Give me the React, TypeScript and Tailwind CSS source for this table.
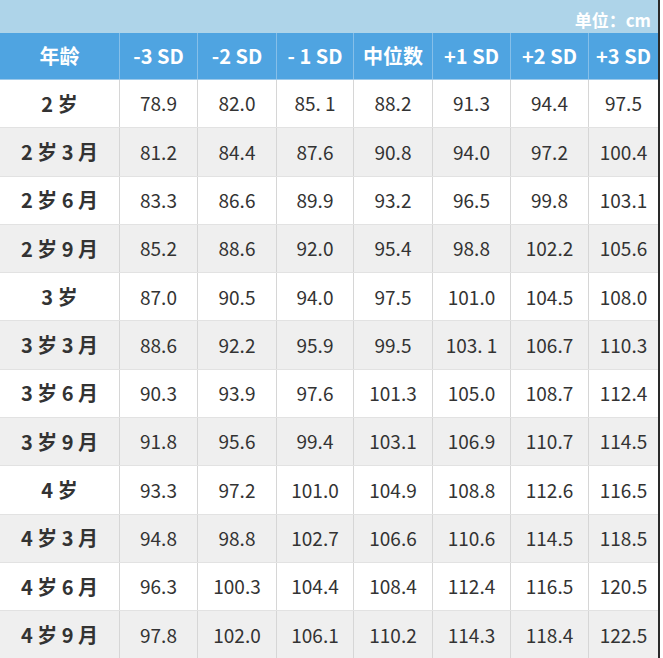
import React from "react";

const headers = ["年龄", "-3 SD", "-2 SD", "- 1 SD", "中位数", "+1 SD", "+2 SD", "+3 SD"];

const rows: string[][] = [
  ["2 岁", "78.9", "82.0", "85. 1", "88.2", "91.3", "94.4", "97.5"],
  ["2 岁 3 月", "81.2", "84.4", "87.6", "90.8", "94.0", "97.2", "100.4"],
  ["2 岁 6 月", "83.3", "86.6", "89.9", "93.2", "96.5", "99.8", "103.1"],
  ["2 岁 9 月", "85.2", "88.6", "92.0", "95.4", "98.8", "102.2", "105.6"],
  ["3 岁", "87.0", "90.5", "94.0", "97.5", "101.0", "104.5", "108.0"],
  ["3 岁 3 月", "88.6", "92.2", "95.9", "99.5", "103. 1", "106.7", "110.3"],
  ["3 岁 6 月", "90.3", "93.9", "97.6", "101.3", "105.0", "108.7", "112.4"],
  ["3 岁 9 月", "91.8", "95.6", "99.4", "103.1", "106.9", "110.7", "114.5"],
  ["4 岁", "93.3", "97.2", "101.0", "104.9", "108.8", "112.6", "116.5"],
  ["4 岁 3 月", "94.8", "98.8", "102.7", "106.6", "110.6", "114.5", "118.5"],
  ["4 岁 6 月", "96.3", "100.3", "104.4", "108.4", "112.4", "116.5", "120.5"],
  ["4 岁 9 月", "97.8", "102.0", "106.1", "110.2", "114.3", "118.4", "122.5"],
];

const cols = "grid grid-cols-[119px_78px_79px_77px_79px_78px_78px_70px]";

export default function App() {
  return (
    <div
      className="w-[663px] h-[658px] overflow-hidden bg-white"
      style={{ fontFamily: '"Noto Sans CJK SC", "Noto Sans", sans-serif' }}
    >
      <div className="w-[660px] border-r-2 border-[#2a2a2a]">
        <div className="h-[33px] bg-[#aed4e9] flex items-end justify-end pr-[7px] pb-[2px]">
          <span className="text-white font-bold text-[17px] leading-[22px]">单位：cm</span>
        </div>
        <div className={`${cols} h-[47px] bg-[#4fa4e1] border-b border-[#9cc9ea]`}>
          {headers.map((h, i) => (
            <div
              key={i}
              className={`flex items-center justify-center text-white font-bold text-[20px] ${
                i > 0 ? "border-l border-[#86bfe9]" : ""
              }`}
            >
              {h}
            </div>
          ))}
        </div>
        {rows.map((r, ri) => (
          <div
            key={ri}
            className={`${cols} h-[48.3px] border-b border-[#e2e2e2] ${
              ri % 2 === 1 ? "bg-[#efefef]" : "bg-white"
            }`}
          >
            {r.map((c, ci) => (
              <div
                key={ci}
                className={`flex items-center justify-center text-[#333333] ${
                  ci === 0 ? "font-bold text-[20px]" : "text-[19px] border-l border-[#d6d6d6]"
                }`}
              >
                {c}
              </div>
            ))}
          </div>
        ))}
      </div>
    </div>
  );
}
